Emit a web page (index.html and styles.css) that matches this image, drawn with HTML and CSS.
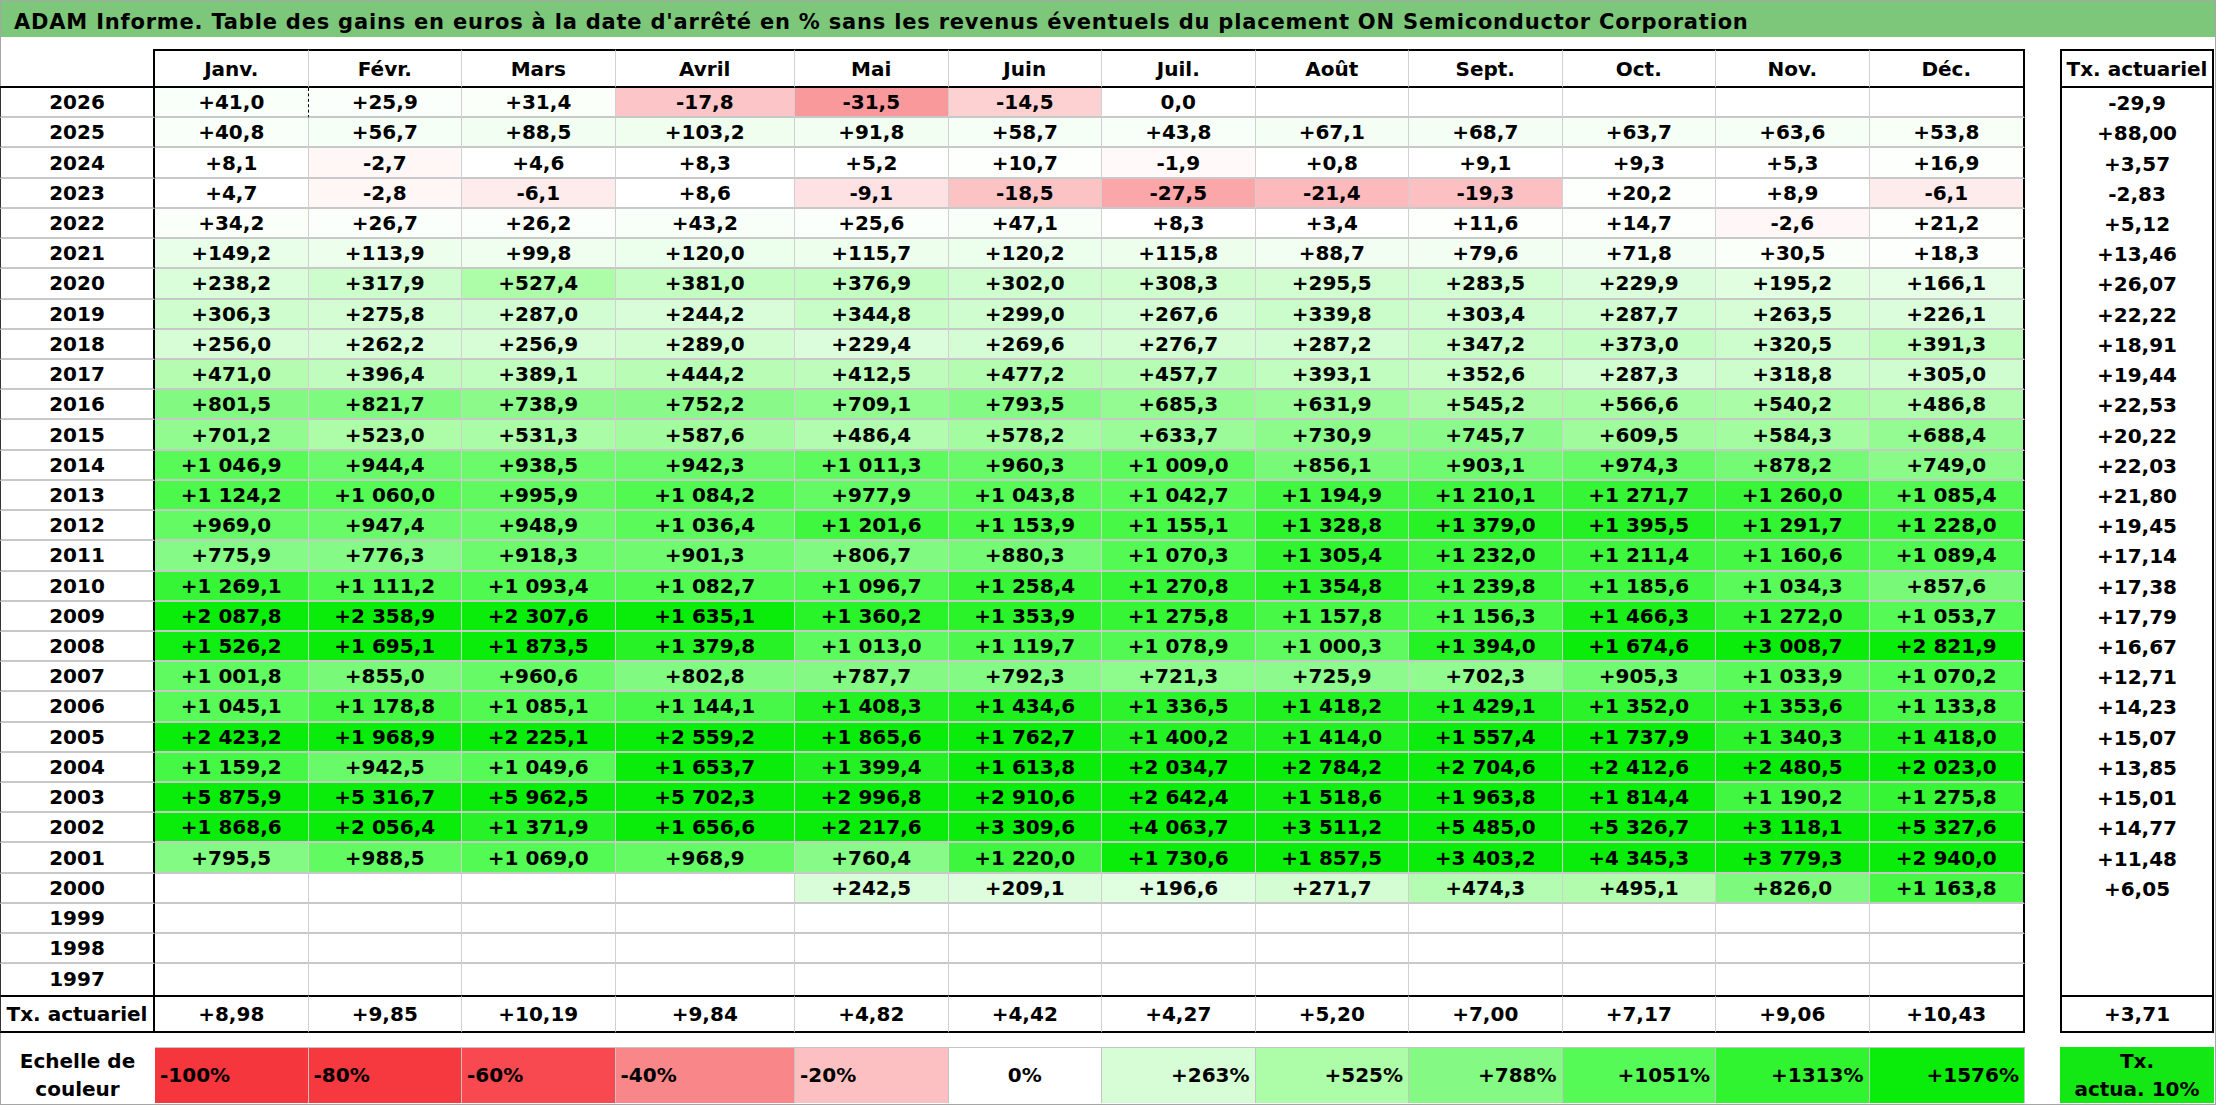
FILE: index.html
```html
<!DOCTYPE html>
<html lang="fr">
<head>
<meta charset="utf-8">
<title>ADAM Informe</title>
<link rel="stylesheet" href="styles.css">
</head>
<body>
<div class="page">
  <div class="title">ADAM Informe. Table des gains en euros à la date d'arrêté en % sans les revenus éventuels du placement ON Semiconductor Corporation</div>
  <div class="sheet" id="sheet"></div>
  <div class="scale">
    <div class="cell sl"><span>Echelle de</span><span>couleur</span></div>
    <div class="cell sc neg s1">-100%</div>
    <div class="cell sc neg s2">-80%</div>
    <div class="cell sc neg s3">-60%</div>
    <div class="cell sc neg s4">-40%</div>
    <div class="cell sc neg s5">-20%</div>
    <div class="cell sc zero">0%</div>
    <div class="cell sc pos s7">+263%</div>
    <div class="cell sc pos s8">+525%</div>
    <div class="cell sc pos s9">+788%</div>
    <div class="cell sc pos s10">+1051%</div>
    <div class="cell sc pos s11">+1313%</div>
    <div class="cell sc pos s12">+1576%</div>
    <div class="gap"></div>
    <div class="cell stx"><span>Tx.</span><span>actua. 10%</span></div>
  </div>
</div>
<script src="script.js"></script>
</body>
</html>
```

FILE: styles.css
```css
:root {
  --cols: 155px 153.5px 153.5px 153.5px 179.5px 153.5px 153.5px 153.5px 153.5px 153.5px 153.5px 153.5px 155.5px 35px 154px;
}
* { box-sizing: border-box; }
html, body { margin: 0; padding: 0; background: #fff; }
body {
  font-family: "DejaVu Sans", "Liberation Sans", sans-serif;
  font-weight: 700;
  font-size: 20px;
  color: #000;
}
.page {
  width: 2216px;
  height: 1105px;
  border: 1px solid #a6a6a6;
}
.title {
  height: 36px;
  background: #7dc77b;
  padding: 6px 0 0 13px;
  font-size: 21px;
  line-height: 30px;
  letter-spacing: 0.8px;
  white-space: nowrap;
  overflow: hidden;
}
.sheet {
  display: grid;
  grid-template-columns: var(--cols);
  grid-template-rows: 39px repeat(30, 30.233px) 38px;
  margin: 12px 0 0 -1px;
}
.scale {
  display: grid;
  grid-template-columns: var(--cols);
  grid-template-rows: 56px;
  margin: 14px 0 0 -1px;
}
.cell {
  display: flex;
  align-items: center;
  justify-content: center;
  white-space: nowrap;
}
.yh { border-right: 2px solid #000; border-bottom: 2px solid #000; }
.mh { border-top: 2px solid #000; border-bottom: 2px solid #000; border-right: 1px solid #d0d0d0; }
.yr { border-left: 1px solid #333; border-right: 2px solid #000; border-bottom: 2px solid #c8c8c8; }
.d { border-right: 1px solid #d0d0d0; border-bottom: 2px solid #c8c8c8; }
.dec { border-right: 2px solid #000; }
.dash { border-right: 1px dashed #000; }
.last { border-bottom: 0; }
.tot { border-top: 2px solid #000; border-bottom: 2px solid #000; }
.txh { border: 2px solid #000; }
.txv { border-left: 2px solid #000; border-right: 2px solid #000; }
.txt { border: 2px solid #000; }

.sl { flex-direction: column; line-height: 28px; }
.sc { border-top: 1px solid #c4c4c4; border-right: 1px solid #c4c4c4; }
.neg { justify-content: flex-start; padding-left: 5px; }
.pos { justify-content: flex-end; padding-right: 5px; }
.stx { flex-direction: column; line-height: 28px; background: #14e814; }

.s1 { background: #f6363d; }
.s2 { background: #f6393f; }
.s3 { background: #f7494f; }
.s4 { background: #f98689; }
.s5 { background: #fcc0c2; }
.s7 { background: #d6fdd6; }
.s8 { background: #acfca8; }
.s9 { background: #84fa84; }
.s10 { background: #56fa56; }
.s11 { background: #30f430; }
.s12 { background: #0aec0a; }
```

FILE: script.js
```js
(function () {
  var months = ['Janv.', 'Févr.', 'Mars', 'Avril', 'Mai', 'Juin', 'Juil.', 'Août', 'Sept.', 'Oct.', 'Nov.', 'Déc.'];
  var rows = [
    ['2026', '+41,0|+25,9|+31,4|-17,8|-31,5|-14,5|0,0||||||-29,9'],
    ['2025', '+40,8|+56,7|+88,5|+103,2|+91,8|+58,7|+43,8|+67,1|+68,7|+63,7|+63,6|+53,8|+88,00'],
    ['2024', '+8,1|-2,7|+4,6|+8,3|+5,2|+10,7|-1,9|+0,8|+9,1|+9,3|+5,3|+16,9|+3,57'],
    ['2023', '+4,7|-2,8|-6,1|+8,6|-9,1|-18,5|-27,5|-21,4|-19,3|+20,2|+8,9|-6,1|-2,83'],
    ['2022', '+34,2|+26,7|+26,2|+43,2|+25,6|+47,1|+8,3|+3,4|+11,6|+14,7|-2,6|+21,2|+5,12'],
    ['2021', '+149,2|+113,9|+99,8|+120,0|+115,7|+120,2|+115,8|+88,7|+79,6|+71,8|+30,5|+18,3|+13,46'],
    ['2020', '+238,2|+317,9|+527,4|+381,0|+376,9|+302,0|+308,3|+295,5|+283,5|+229,9|+195,2|+166,1|+26,07'],
    ['2019', '+306,3|+275,8|+287,0|+244,2|+344,8|+299,0|+267,6|+339,8|+303,4|+287,7|+263,5|+226,1|+22,22'],
    ['2018', '+256,0|+262,2|+256,9|+289,0|+229,4|+269,6|+276,7|+287,2|+347,2|+373,0|+320,5|+391,3|+18,91'],
    ['2017', '+471,0|+396,4|+389,1|+444,2|+412,5|+477,2|+457,7|+393,1|+352,6|+287,3|+318,8|+305,0|+19,44'],
    ['2016', '+801,5|+821,7|+738,9|+752,2|+709,1|+793,5|+685,3|+631,9|+545,2|+566,6|+540,2|+486,8|+22,53'],
    ['2015', '+701,2|+523,0|+531,3|+587,6|+486,4|+578,2|+633,7|+730,9|+745,7|+609,5|+584,3|+688,4|+20,22'],
    ['2014', '+1 046,9|+944,4|+938,5|+942,3|+1 011,3|+960,3|+1 009,0|+856,1|+903,1|+974,3|+878,2|+749,0|+22,03'],
    ['2013', '+1 124,2|+1 060,0|+995,9|+1 084,2|+977,9|+1 043,8|+1 042,7|+1 194,9|+1 210,1|+1 271,7|+1 260,0|+1 085,4|+21,80'],
    ['2012', '+969,0|+947,4|+948,9|+1 036,4|+1 201,6|+1 153,9|+1 155,1|+1 328,8|+1 379,0|+1 395,5|+1 291,7|+1 228,0|+19,45'],
    ['2011', '+775,9|+776,3|+918,3|+901,3|+806,7|+880,3|+1 070,3|+1 305,4|+1 232,0|+1 211,4|+1 160,6|+1 089,4|+17,14'],
    ['2010', '+1 269,1|+1 111,2|+1 093,4|+1 082,7|+1 096,7|+1 258,4|+1 270,8|+1 354,8|+1 239,8|+1 185,6|+1 034,3|+857,6|+17,38'],
    ['2009', '+2 087,8|+2 358,9|+2 307,6|+1 635,1|+1 360,2|+1 353,9|+1 275,8|+1 157,8|+1 156,3|+1 466,3|+1 272,0|+1 053,7|+17,79'],
    ['2008', '+1 526,2|+1 695,1|+1 873,5|+1 379,8|+1 013,0|+1 119,7|+1 078,9|+1 000,3|+1 394,0|+1 674,6|+3 008,7|+2 821,9|+16,67'],
    ['2007', '+1 001,8|+855,0|+960,6|+802,8|+787,7|+792,3|+721,3|+725,9|+702,3|+905,3|+1 033,9|+1 070,2|+12,71'],
    ['2006', '+1 045,1|+1 178,8|+1 085,1|+1 144,1|+1 408,3|+1 434,6|+1 336,5|+1 418,2|+1 429,1|+1 352,0|+1 353,6|+1 133,8|+14,23'],
    ['2005', '+2 423,2|+1 968,9|+2 225,1|+2 559,2|+1 865,6|+1 762,7|+1 400,2|+1 414,0|+1 557,4|+1 737,9|+1 340,3|+1 418,0|+15,07'],
    ['2004', '+1 159,2|+942,5|+1 049,6|+1 653,7|+1 399,4|+1 613,8|+2 034,7|+2 784,2|+2 704,6|+2 412,6|+2 480,5|+2 023,0|+13,85'],
    ['2003', '+5 875,9|+5 316,7|+5 962,5|+5 702,3|+2 996,8|+2 910,6|+2 642,4|+1 518,6|+1 963,8|+1 814,4|+1 190,2|+1 275,8|+15,01'],
    ['2002', '+1 868,6|+2 056,4|+1 371,9|+1 656,6|+2 217,6|+3 309,6|+4 063,7|+3 511,2|+5 485,0|+5 326,7|+3 118,1|+5 327,6|+14,77'],
    ['2001', '+795,5|+988,5|+1 069,0|+968,9|+760,4|+1 220,0|+1 730,6|+1 857,5|+3 403,2|+4 345,3|+3 779,3|+2 940,0|+11,48'],
    ['2000', '||||+242,5|+209,1|+196,6|+271,7|+474,3|+495,1|+826,0|+1 163,8|+6,05'],
    ['1999', '||||||||||||'],
    ['1998', '||||||||||||'],
    ['1997', '||||||||||||']
  ];
  var totals = '+8,98|+9,85|+10,19|+9,84|+4,82|+4,42|+4,27|+5,20|+7,00|+7,17|+9,06|+10,43|+3,71';

  var anchors = [
    [-100, [246, 54, 61]], [-80, [246, 57, 63]], [-60, [247, 73, 79]], [-40, [249, 126, 129]],
    [-20, [252, 190, 192]], [0, [255, 255, 255]], [263, [214, 253, 214]], [525, [172, 252, 168]],
    [788, [132, 250, 132]], [1051, [86, 250, 86]], [1313, [48, 244, 48]], [1576, [10, 236, 10]]
  ];

  function colorFor(v) {
    var c;
    if (v <= anchors[0][0]) {
      c = anchors[0][1];
    } else if (v >= anchors[anchors.length - 1][0]) {
      c = anchors[anchors.length - 1][1];
    } else {
      for (var i = 0; i < anchors.length - 1; i++) {
        var a = anchors[i], b = anchors[i + 1];
        if (v >= a[0] && v <= b[0]) {
          var t = (v - a[0]) / (b[0] - a[0]);
          c = [0, 1, 2].map(function (k) { return Math.round(a[1][k] + (b[1][k] - a[1][k]) * t); });
          break;
        }
      }
    }
    return 'rgb(' + c[0] + ',' + c[1] + ',' + c[2] + ')';
  }

  function parse(s) {
    return parseFloat(s.replace(/\s/g, '').replace('+', '').replace(',', '.'));
  }

  var sheet = document.getElementById('sheet');
  function add(cls, text, bg) {
    var d = document.createElement('div');
    d.className = cls;
    if (text) d.textContent = text;
    if (bg) d.style.background = bg;
    sheet.appendChild(d);
  }

  // header row
  add('cell yh', '');
  months.forEach(function (m, i) {
    add('cell mh' + (i === 11 ? ' dec' : ''), m);
  });
  add('gap', '');
  add('cell txh', 'Tx. actuariel');

  rows.forEach(function (r, ri) {
    var vals = r[1].split('|');
    var last = ri === rows.length - 1 ? ' last' : '';
    add('cell yr' + last, r[0]);
    for (var i = 0; i < 12; i++) {
      var s = vals[i] || '';
      var cls = 'cell d' + (i === 11 ? ' dec' : '') + last;
      if (ri === 0 && i === 0) cls += ' dash';
      add(cls, s, s ? colorFor(parse(s)) : '');
    }
    add('gap', '');
    add('cell txv', vals[12] || '');
  });

  var tv = totals.split('|');
  add('cell yr tot', 'Tx. actuariel');
  for (var j = 0; j < 12; j++) {
    add('cell d tot' + (j === 11 ? ' dec' : ''), tv[j]);
  }
  add('gap', '');
  add('cell txt', tv[12]);
})();
```
